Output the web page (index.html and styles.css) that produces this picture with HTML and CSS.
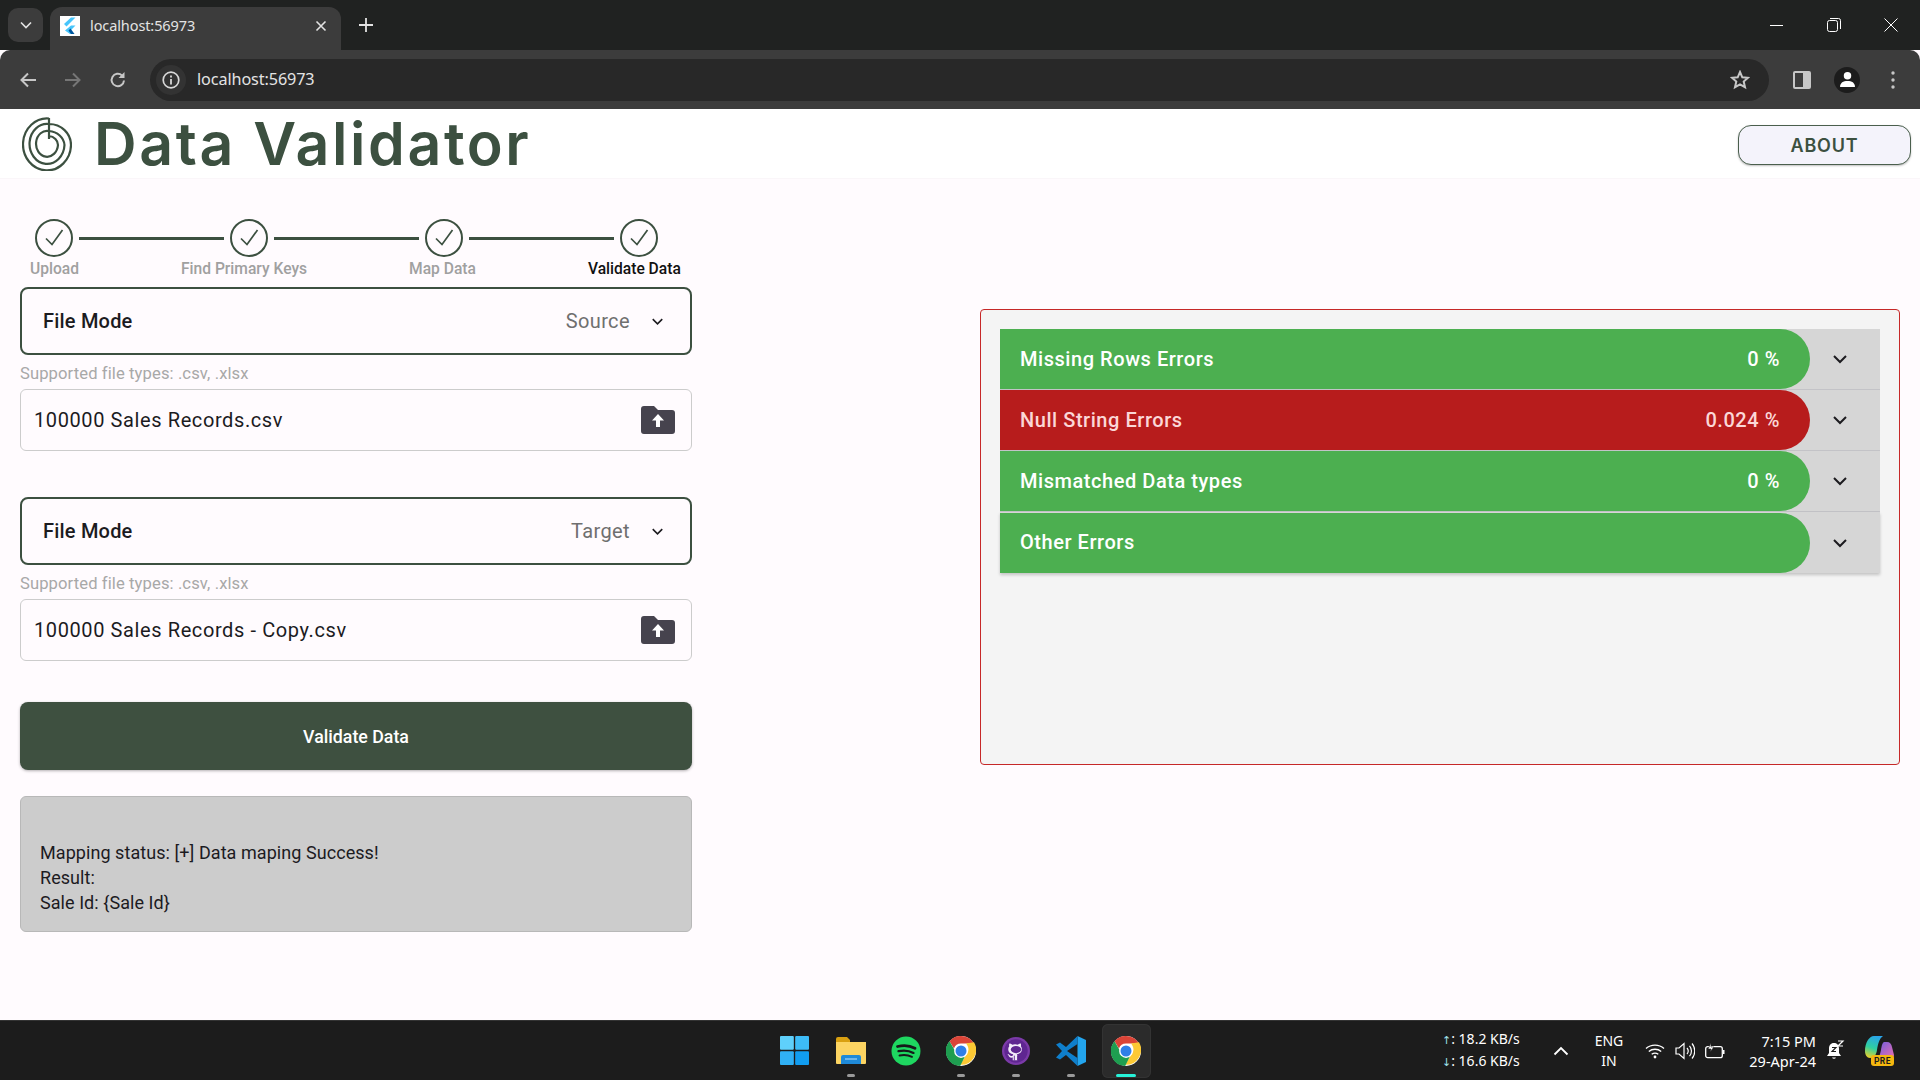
FILE: index.html
```html
<!DOCTYPE html>
<html lang="en">
<head>
    <meta charset="UTF-8">
    <title>localhost:56973</title>
    <link rel="stylesheet" href="styles.css">
</head>
<body>
    <svg class="defs" width="0" height="0">
        <defs>
            <symbol id="chrome" viewBox="0 0 48 48">
                <circle cx="24" cy="24" r="24" fill="#fff"/>
                <path d="M24 0a24 24 0 0 1 20.8 12H24a12 12 0 0 0-11.3 8L5.6 8.2A24 24 0 0 1 24 0z" fill="#db4437"/>
                <path d="M44.8 12A24 24 0 0 1 22.6 48l10.6-17.3A12 12 0 0 0 34.6 18 12 12 0 0 0 32 14z" fill="#fcc934" transform="translate(0 -2)"/>
                <path d="M5.6 8.2l10.6 18.4a12 12 0 0 0 14 6.2L22.6 48A24 24 0 0 1 5.6 8.2z" fill="#1e9e50"/>
                <circle cx="24" cy="24" r="11" fill="#fff"/>
                <circle cx="24" cy="24" r="8.8" fill="#2f7fe8"/>
            </symbol>
            <symbol id="check" viewBox="0 0 38 38">
                <circle cx="19" cy="19" r="18" fill="none" stroke="#3c5040" stroke-width="2"/>
                <path d="M11 19.5l6 6L27.5 11" fill="none" stroke="#3c5040" stroke-width="1.7"/>
            </symbol>
            <symbol id="chev" viewBox="0 0 24 24">
                <path d="M6 9l6 6 6-6" fill="none" stroke="currentColor" stroke-width="2"/>
            </symbol>
            <symbol id="upfolder" viewBox="0 0 34 28">
                <path d="M3 0h10l4 4h14a3 3 0 0 1 3 3v18a3 3 0 0 1-3 3H3a3 3 0 0 1-3-3V3a3 3 0 0 1 3-3z" fill="#46434e"/>
                <path d="M17 8l6 6.5h-4V21h-4v-6.500h-4z" fill="#fff"/>
            </symbol>
        </defs>
    </svg>

    <div class="tabstrip">
        <div class="tab-list"><svg class="icon-14"><use href="#chev"/></svg></div>
        <div class="tab">
            <span class="favicon">
                <svg viewBox="0 0 20 20" width="20" height="20">
                    <path d="M11 1.500h4.500L6.500 10.500 4 8z" fill="#47c5fb"/>
                    <path d="M11 9.500h4.500L10.500 14.500l3.500 3.500H10l-5-3.500z" fill="#47c5fb"/>
                    <path d="M8.500 14.500l2-2 4 5.500H11z" fill="#00569e"/>
                </svg>
            </span>
            <span class="tab-title">localhost:56973</span>
            <span class="tab-close">
                <svg viewBox="0 0 12 12" width="12" height="12"><path d="M1.500 1.500l9 9M10.500 1.500l-9 9" stroke="#e3e3e3" stroke-width="1.600"/></svg>
            </span>
        </div>
        <div class="tab-new">
            <svg viewBox="0 0 14 14" width="14" height="14"><path d="M7 0v14M0 7h14" stroke="#e3e3e3" stroke-width="1.800"/></svg>
        </div>
        <div class="win-controls">
            <svg viewBox="0 0 14 14" width="14" height="14"><path d="M0 7.500h13" stroke="#fff"/></svg>
            <svg viewBox="0 0 14 14" width="14" height="14"><rect x=".5" y="2.500" width="10" height="11" rx="2" fill="none" stroke="#fff"/><path d="M3 .5h8.500a2 2 0 0 1 2 2V11" fill="none" stroke="#fff"/></svg>
            <svg viewBox="0 0 14 14" width="14" height="14"><path d="M.5.5l13 13M13.500.5l-13 13" stroke="#fff"/></svg>
        </div>
    </div>

    <div class="toolbar">
        <svg class="tool-icon" viewBox="0 0 18 18"><path d="M17 9H3M9 2.500L2.500 9 9 15.500" fill="none" stroke="#c7c7c7" stroke-width="2"/></svg>
        <svg class="tool-icon" viewBox="0 0 18 18"><path d="M1 9h14M9 2.500L15.500 9 9 15.500" fill="none" stroke="#767676" stroke-width="2"/></svg>
        <svg class="tool-icon" viewBox="0 0 18 18"><path d="M15 9.500A6.200 6.200 0 1 1 13 4.400" fill="none" stroke="#c7c7c7" stroke-width="2"/><path d="M15.500 1v6h-6z" fill="#c7c7c7"/></svg>
        <div class="omnibox">
            <span class="info-chip">
                <svg viewBox="0 0 18 18" width="18" height="18"><circle cx="9" cy="9" r="7.800" fill="none" stroke="#d8d8d8" stroke-width="1.700"/><path d="M9 8v5.500M9 4.500v2" stroke="#d8d8d8" stroke-width="1.800"/></svg>
            </span>
            <span class="url">localhost:56973</span>
            <svg class="star" viewBox="0 0 20 20" width="20" height="20"><path d="M10 2l2.300 5.300 5.700.5-4.300 3.800 1.300 5.600L10 14.300l-5 2.900 1.300-5.600L2 7.800l5.700-.5z" fill="none" stroke="#c7c7c7" stroke-width="2"/></svg>
        </div>
        <div class="toolbar-right">
            <svg class="panel-icon" viewBox="0 0 18 18" width="18" height="18"><rect width="18" height="18" rx="2" fill="#c7c7c7"/><rect x="2" y="2" width="8" height="14" fill="#3c3c3c"/></svg>
            <span class="avatar">
                <svg viewBox="0 0 16 16" width="17" height="17"><circle cx="8" cy="4.500" r="3.500" fill="#fff"/><path d="M1 15c0-4 3-5.500 7-5.500s7 1.500 7 5.500z" fill="#fff"/></svg>
            </span>
            <svg viewBox="0 0 4 18" width="4" height="18"><circle cx="2" cy="2" r="1.700" fill="#c7c7c7"/><circle cx="2" cy="9" r="1.700" fill="#c7c7c7"/><circle cx="2" cy="16" r="1.700" fill="#c7c7c7"/></svg>
        </div>
    </div>

    <div class="page">
        <header class="app-header">
            <svg class="logo" viewBox="0 0 50 54" width="50" height="54">
                <path d="M27 1v21M27 1.500A24 26 0 1 0 49 28 22 21 0 0 0 27 7 17.500 20 0 1 0 42.500 28 17 15 0 0 0 27 14 11 13 0 1 0 36 28 10 9 0 0 0 27 19" fill="none" stroke="#3c5040" stroke-width="2.200"/>
            </svg>
            <h1 class="app-title">Data Validator</h1>
            <button class="about-btn">ABOUT</button>
        </header>

        <main class="content">
            <section class="left-col">
                <div class="stepper">
                    <svg class="step-circle"><use href="#check"/></svg>
                    <span class="step-line"></span>
                    <svg class="step-circle"><use href="#check"/></svg>
                    <span class="step-line"></span>
                    <svg class="step-circle"><use href="#check"/></svg>
                    <span class="step-line"></span>
                    <svg class="step-circle"><use href="#check"/></svg>
                </div>
                <div class="step-labels">
                    <span>Upload</span>
                    <span class="label-find">Find Primary Keys</span>
                    <span class="label-map">Map Data</span>
                    <span class="label-validate">Validate Data</span>
                </div>

                <div class="mode-box">
                    <span class="mode-label">File Mode</span>
                    <span class="mode-value">Source</span>
                    <svg class="mode-chev"><use href="#chev"/></svg>
                </div>
                <p class="file-hint">Supported file types: .csv, .xlsx</p>
                <div class="file-input">
                    <span>100000 Sales Records.csv</span>
                    <svg class="upload-icon"><use href="#upfolder"/></svg>
                </div>

                <div class="mode-box second">
                    <span class="mode-label">File Mode</span>
                    <span class="mode-value">Target</span>
                    <svg class="mode-chev"><use href="#chev"/></svg>
                </div>
                <p class="file-hint">Supported file types: .csv, .xlsx</p>
                <div class="file-input">
                    <span>100000 Sales Records - Copy.csv</span>
                    <svg class="upload-icon"><use href="#upfolder"/></svg>
                </div>

                <button class="validate-btn">Validate Data</button>

                <div class="status-box">
                    <div>Mapping status: [+] Data maping Success!</div>
                    <div>Result:</div>
                    <div>Sale Id: {Sale Id}</div>
                </div>
            </section>

            <section class="result-panel">
                <div class="error-row">
                    <div class="error-pill ok"><span>Missing Rows Errors</span><span>0 %</span></div>
                    <svg class="row-chev"><use href="#chev"/></svg>
                </div>
                <div class="error-row">
                    <div class="error-pill bad"><span>Null String Errors</span><span>0.024 %</span></div>
                    <svg class="row-chev"><use href="#chev"/></svg>
                </div>
                <div class="error-row">
                    <div class="error-pill ok"><span>Mismatched Data types</span><span>0 %</span></div>
                    <svg class="row-chev"><use href="#chev"/></svg>
                </div>
                <div class="error-row">
                    <div class="error-pill ok"><span>Other Errors</span></div>
                    <svg class="row-chev"><use href="#chev"/></svg>
                </div>
            </section>
        </main>
    </div>

    <footer class="taskbar">
        <div></div>
        <div class="task-icons">
            <span class="task-item">
                <svg class="win-icon" viewBox="0 0 30 30" width="29" height="29">
                    <rect x="0" y="0" width="14.300" height="14.300" rx="1" fill="#5fd0fb"/>
                    <rect x="15.700" y="0" width="14.300" height="14.300" rx="1" fill="#3dbcf7"/>
                    <rect x="0" y="15.700" width="14.300" height="14.300" rx="1" fill="#30b0f5"/>
                    <rect x="15.700" y="15.700" width="14.300" height="14.300" rx="1" fill="#119df0"/>
                </svg>
            </span>
            <span class="task-item running">
                <svg viewBox="0 0 30 28" width="30" height="28">
                    <path d="M0 2a2 2 0 0 1 2-2h9l3 3v3H0z" fill="#d9a011"/>
                    <path d="M0 5h30v21a1 1 0 0 1-1 1H1a1 1 0 0 1-1-1z" fill="#fcd462"/>
                    <path d="M5 20a2 2 0 0 1 2-2h16a2 2 0 0 1 2 2v7H5z" fill="#1f8ad9"/>
                    <path d="M9 22h12" stroke="#bfe3ff" stroke-width="1"/>
                </svg>
            </span>
            <span class="task-item">
                <svg viewBox="0 0 30 30" width="30" height="30">
                    <circle cx="15" cy="15" r="14.500" fill="#1ed760"/>
                    <g fill="none" stroke="#16191a" stroke-linecap="round">
                        <path d="M6.500 10.500c6-1.600 12.500-1 17.500 1.800" stroke-width="2.800"/>
                        <path d="M7.500 15.200c5.500-1.300 10.500-.7 15 1.700" stroke-width="2.300"/>
                        <path d="M8.500 19.500c4.500-1 8.500-.6 12.500 1.300" stroke-width="1.900"/>
                    </g>
                </svg>
            </span>
            <span class="task-item running"><svg class="chrome-icon"><use href="#chrome"/></svg></span>
            <span class="task-item running">
                <svg viewBox="0 0 30 30" width="28" height="28">
                    <circle cx="15" cy="15" r="15" fill="#7b3aa8"/>
                    <circle cx="15" cy="15" r="12.500" fill="#5f2691"/>
                    <path d="M11.500 25v-3c-3 .6-4-1-4.500-2.300-.3-.7-.8-1.200-1.300-1.500.5-.3 1.700 0 2.400 1.200.7 1.100 1.900 1.200 3.300.7.100-.8.400-1.400.8-1.700-3-.4-5.500-1.700-5.500-5.600 0-1.100.4-2.100 1.100-2.900-.2-.5-.4-1.700.1-3 1.200 0 2.500.8 3.100 1.300a11 11 0 0 1 6 0c.6-.5 1.900-1.300 3.100-1.300.5 1.300.3 2.500.1 3 .7.800 1.100 1.800 1.100 2.900 0 3.900-2.500 5.200-5.500 5.600.5.500.8 1.200.8 2.200V25z" fill="#f3ecfa"/>
                    <ellipse cx="15" cy="13.500" rx="5.600" ry="3.800" fill="#5f2691"/>
                    <path d="M13.200 20v5M16.800 20v5" stroke="#5f2691" stroke-width="1"/>
                </svg>
            </span>
            <span class="task-item running">
                <svg viewBox="0 0 30 30" width="30" height="30">
                    <path d="M21.500 0L30 4v22l-8.500 4z" fill="#23a5ee"/>
                    <path d="M21.500 0L10 11 4 6.500 0 8.500 6 15l-6 6.500 4 2L10 19l11.500 11v-8L11 15l10.500-7z" fill="#0f7fcc"/>
                </svg>
            </span>
            <span class="task-item active"><svg class="chrome-icon"><use href="#chrome"/></svg></span>
        </div>
        <div class="tray">
            <div class="net-speed">
                <div><span class="net-arrow">↑</span>: 18.2 KB/s</div>
                <div><span class="net-arrow">↓</span>: 16.6 KB/s</div>
            </div>
            <svg class="tray-chev" viewBox="0 0 16 10" width="16" height="10"><path d="M1.500 8.500L8 2l6.500 6.500" fill="none" stroke="#fff" stroke-width="1.800"/></svg>
            <div class="lang">ENG<br>IN</div>
            <svg class="tray-wifi" viewBox="0 0 20 16" width="20" height="16"><g fill="none" stroke="#fff" stroke-width="1.300"><path d="M1 5.500c5-4.500 13-4.500 18 0"/><path d="M3.800 8.500c3.500-3 8.900-3 12.400 0"/><path d="M6.700 11.300c2-1.500 4.600-1.500 6.600 0"/></g><circle cx="10" cy="14" r="1.400" fill="#fff"/></svg>
            <svg class="tray-vol" viewBox="0 0 20 18" width="20" height="18"><path d="M1 6h3l5-4.500v15L4 12H1z" fill="none" stroke="#fff" stroke-width="1.200"/><g fill="none" stroke="#fff" stroke-width="1.200"><path d="M12 6c1.500 1.800 1.500 4.200 0 6"/><path d="M14.500 3.800c2.600 3 2.600 7.400 0 10.400"/><path d="M17 1.500c3.700 4.300 3.700 10.700 0 15"/></g></svg>
            <svg class="tray-batt" viewBox="0 0 20 16" width="20" height="16"><rect x=".7" y="3.700" width="16.600" height="11" rx="2" fill="none" stroke="#fff" stroke-width="1.300"/><rect x="18" y="7" width="1.500" height="4" fill="#fff"/><path d="M6 0L3 6h3l-1 3 4-5H6z" fill="#fff" stroke="#1c1c1c" stroke-width=".6"/></svg>
            <div class="clock">7:15 PM<br>29-Apr-24</div>
            <svg class="tray-bell" viewBox="0 0 20 22" width="20" height="22"><path d="M9 3c3.500 0 5 2.500 5 5.500V13l2 3H2l2-3V8.500C4 5.500 5.500 3 9 3z" fill="#fff"/><path d="M7 17.500a2.200 2.200 0 0 0 4 0z" fill="#fff"/><path d="M7 7.500h4l-4 4h4" fill="none" stroke="#1c1c1c" stroke-width="1.100"/><path d="M13 1h5l-5 5h5" fill="none" stroke="#fff" stroke-width="1.200"/></svg>
            <svg class="tray-copilot" viewBox="0 0 30 32" width="30" height="32">
                <defs>
                    <linearGradient id="cpA" x1="0.600" y1="0" x2="0.300" y2="1"><stop offset="0" stop-color="#2aa5ea"/><stop offset=".55" stop-color="#2fd0a0"/><stop offset="1" stop-color="#e6d02c"/></linearGradient>
                    <linearGradient id="cpB" x1="0" y1="0" x2="1" y2="1"><stop offset="0" stop-color="#6a5ce0"/><stop offset="1" stop-color="#ec6fb0"/></linearGradient>
                </defs>
                <path d="M9 1h9c-4 3-5 8-6 14-.7 5-3 8-7 8-3 0-5-3-5-7C0 8 4 1 9 1z" fill="url(#cpA)"/>
                <path d="M19 7h3c3 0 4.500 2 5 5l2 8c0 3-3 4-6 4H11c4-2 4-5 5-9 .5-3 1-7 3-8z" fill="url(#cpB)"/>
                <rect x="6" y="20" width="23" height="11" rx="3" fill="#f5b70f"/>
                <text x="17.500" y="28.800" class="pre-text">PRE</text>
            </svg>
        </div>
    </footer>
</body>
</html>
```

FILE: styles.css
```css
* {
    box-sizing: border-box;
}

html, body {
    margin: 0;
    height: 1080px;
    overflow: hidden;
}

body {
    display: flex;
    flex-direction: column;
    width: 1920px;
    background-color: #fffbfe;
    font-family: Roboto, sans-serif;
}

.defs {
    position: absolute;
}

/* browser tabs */
.tabstrip {
    height: 50px;
    flex-shrink: 0;
    display: flex;
    align-items: flex-start;
    background-color: #202221;
    color: #e3e3e3;
    font-family: "Noto Sans", sans-serif;
}

.tab-list {
    width: 35px;
    height: 34px;
    margin: 8px 7px 0 8px;
    border-radius: 10px;
    background-color: #3c3c3c;
    display: flex;
    align-items: center;
    justify-content: center;
    color: #e3e3e3;
}

.icon-14 {
    width: 20px;
    height: 20px;
}

.tab {
    width: 291px;
    height: 43px;
    margin-top: 7px;
    padding: 0 14px 6px 10px;
    border-radius: 12px 12px 0 0;
    background-color: #3c3c3c;
    display: flex;
    align-items: center;
}

.favicon {
    width: 20px;
    height: 20px;
    margin-right: 10px;
    background-color: #fff;
    display: flex;
}

.tab-title {
    flex: 1;
    margin-top: -2px;
    font-size: 14.500px;
    letter-spacing: -0.1px;
}

.tab-close {
    display: flex;
}

.tab-new {
    margin: 18px 0 0 18px;
    display: flex;
}

.win-controls {
    margin-left: auto;
    padding: 18px 22px 0 0;
    display: flex;
    gap: 43px;
}

/* browser toolbar */
.toolbar {
    height: 59px;
    flex-shrink: 0;
    display: flex;
    align-items: center;
    padding-left: 19px;
    background-color: #3c3c3c;
    border-radius: 10px 10px 0 0;
}

.tool-icon {
    width: 18px;
    height: 18px;
    margin-right: 27px;
}

.tool-icon:nth-child(3) {
    margin-right: 23px;
}

.omnibox {
    width: 1619px;
    height: 42px;
    padding: 0 19px 0 6px;
    border-radius: 21px;
    background-color: #282828;
    display: flex;
    align-items: center;
    color: #e3e3e3;
}

.info-chip {
    width: 30px;
    height: 30px;
    margin-right: 11px;
    border-radius: 50%;
    background-color: #333;
    display: flex;
    align-items: center;
    justify-content: center;
}

.url {
    flex: 1;
    margin-top: -1px;
    font-family: "Noto Sans", sans-serif;
    font-size: 16.200px;
    letter-spacing: -0.1px;
}

.toolbar-right {
    flex: 1;
    padding-left: 24px;
    display: flex;
    align-items: center;
}

.panel-icon {
    margin-right: 23px;
}

.avatar {
    width: 26px;
    height: 26px;
    margin-right: 31px;
    border-radius: 50%;
    background-color: #1c1c1c;
    display: flex;
    align-items: center;
    justify-content: center;
}

/* app */
.page {
    flex: 1;
    min-height: 0;
}

.app-header {
    height: 69px;
    padding: 0 9px 0 22px;
    background-color: #fff;
    display: flex;
    align-items: center;
    box-shadow: 0 1px 1px rgba(0, 0, 0, 0.02);
}

.logo {
    margin-right: 22px;
}

.app-title {
    margin: 0;
    flex: 1;
    font-family: Inter, sans-serif;
    font-size: 59px;
    font-weight: 600;
    color: #3c5040;
    line-height: 1;
    letter-spacing: 2.6px;
}

.about-btn {
    width: 173px;
    height: 40px;
    margin-top: 3px;
    border: 1.5px solid #4a5f4d;
    border-radius: 13px;
    background-color: #f4f3fb;
    color: #3c5040;
    font-family: Inter, sans-serif;
    font-size: 18px;
    font-weight: 600;
    letter-spacing: 0.8px;
    box-shadow: 0 1px 2px rgba(0, 0, 0, 0.25);
}

.content {
    display: flex;
    align-items: flex-start;
}

.left-col {
    width: 672px;
    margin: 41px 0 0 20px;
}

.stepper {
    padding-left: 15px;
    display: flex;
    align-items: center;
}

.step-circle {
    width: 38px;
    height: 38px;
}

.step-line {
    width: 145px;
    height: 3px;
    margin: 0 6px;
    background-color: #3c5040;
}

.step-labels {
    height: 24px;
    margin-bottom: 6px;
    padding-left: 10px;
    display: flex;
    align-items: center;
    font-size: 15.600px;
    font-weight: 500;
    color: #a0a0a0;
}

.label-find {
    margin-left: 102px;
}

.label-map {
    margin-left: 102px;
}

.label-validate {
    margin-left: 112px;
    color: #111;
}

.mode-box {
    height: 68px;
    padding: 0 23px 0 21px;
    border: 2.5px solid #3c5040;
    border-radius: 8px;
    display: flex;
    align-items: center;
    font-size: 20px;
}

.mode-box.second {
    margin-top: 46px;
}

.mode-label {
    flex: 1;
    color: #1c1b1f;
    font-weight: 500;
    letter-spacing: 0.2px;
}

.mode-value {
    color: #6f6f6f;
    letter-spacing: 0.4px;
    margin-right: 18px;
}

.mode-chev {
    width: 19px;
    height: 19px;
    color: #1c1b1f;
}

.file-hint {
    margin: 10px 0 6px;
    font-size: 16.600px;
    line-height: 18px;
    color: #a8a8a8;
    letter-spacing: 0.1px;
}

.file-input {
    height: 62px;
    padding: 0 16px 0 13px;
    border: 1.5px solid #ccc;
    border-radius: 6px;
    display: flex;
    align-items: center;
    justify-content: space-between;
    font-size: 20px;
    letter-spacing: 0.6px;
    color: #1c1b1f;
}

.upload-icon {
    width: 34px;
    height: 28px;
}

.validate-btn {
    display: block;
    width: 100%;
    height: 68px;
    margin-top: 41px;
    border: none;
    border-radius: 8px;
    background-color: #3e5040;
    color: #fff;
    font-family: Roboto, sans-serif;
    font-size: 17.800px;
    font-weight: 500;
    box-shadow: 0 1px 3px rgba(0, 0, 0, 0.3);
}

.status-box {
    height: 136px;
    margin-top: 26px;
    padding: 43px 19px 0;
    border: 1.5px solid #b8b8b8;
    border-radius: 6px;
    background-color: #ccc;
    font-size: 18px;
    line-height: 25px;
    letter-spacing: 0.06px;
    color: #1c1b1f;
}

.result-panel {
    width: 920px;
    height: 456px;
    margin: 131px 0 0 288px;
    padding: 19px 19px 0;
    border: 1.5px solid #c62828;
    border-radius: 4px;
    background-color: #f4f4f4;
}

.error-row {
    height: 61.1px;
    background-color: #d6d6d6;
    border-bottom: 1.1px solid #c3c3c7;
    display: flex;
    align-items: center;
}

.error-row:last-child {
    border-bottom: none;
    box-shadow: 0 2px 3px rgba(0, 0, 0, 0.2);
}

.error-pill {
    width: 810px;
    height: 60px;
    padding: 0 30px 1px 20px;
    border-radius: 0 30px 30px 0;
    display: flex;
    align-items: center;
    justify-content: space-between;
    font-size: 20px;
    font-weight: 500;
    letter-spacing: 0.55px;
    color: #fff;
}

.error-pill.ok {
    background-color: #4caf50;
}

.error-pill.bad {
    background-color: #b71c1c;
    color: #fbd7d7;
}

.row-chev {
    width: 24px;
    height: 24px;
    margin-left: 18px;
    color: #1c1b1f;
}

/* windows taskbar */
.taskbar {
    height: 60px;
    flex-shrink: 0;
    display: grid;
    grid-template-columns: 1fr auto 1fr;
    background-color: #1c1c1c;
    border-top: 1px solid #333;
    color: #fff;
    font-family: "Noto Sans", sans-serif;
}

.task-icons {
    margin-left: 2px;
    display: flex;
    align-items: center;
}

.task-item {
    position: relative;
    width: 55px;
    height: 54px;
    display: flex;
    align-items: center;
    justify-content: center;
    border-radius: 6px;
}

.win-icon {
    margin-right: 3px;
}

.chrome-icon {
    width: 30px;
    height: 30px;
}

.task-item.running::after,
.task-item.active::after {
    content: "";
    position: absolute;
    bottom: 1px;
    left: 50%;
    width: 8px;
    height: 3px;
    margin-left: -4px;
    border-radius: 2px;
    background-color: #9a9a9a;
}

.task-item.active {
    width: 49px;
    margin: 0 3px;
    background-color: #2b2b2b;
    box-shadow: inset 0 0 0 1px #333;
}

.task-item.active::after {
    width: 20px;
    margin-left: -10px;
    background-color: #27f2d9;
}

.tray {
    display: flex;
    align-items: center;
    justify-content: flex-end;
    font-size: 14px;
    line-height: 20px;
}

.net-speed {
    width: 76px;
    white-space: nowrap;
    font-size: 14px;
}

.net-arrow {
    font-family: "DejaVu Sans", sans-serif;
    font-size: 11px;
    color: #9fe0e8;
}

.tray-chev {
    margin-left: 35px;
}

.lang {
    width: 40px;
    margin-left: 20px;
    text-align: center;
}

.tray-wifi {
    margin-left: 16px;
}

.tray-vol {
    margin-left: 10px;
}

.tray-batt {
    margin-left: 10px;
}

.clock {
    width: 80px;
    margin-left: 11px;
    text-align: right;
    font-size: 14.500px;
}

.tray-bell {
    margin-left: 9px;
}

.tray-copilot {
    margin: 0 25px 0 20px;
}

.pre-text {
    font-family: Roboto, sans-serif;
    font-size: 8.500px;
    font-weight: 700;
    letter-spacing: 0.5px;
    fill: #1c1c1c;
    text-anchor: middle;
}
```
